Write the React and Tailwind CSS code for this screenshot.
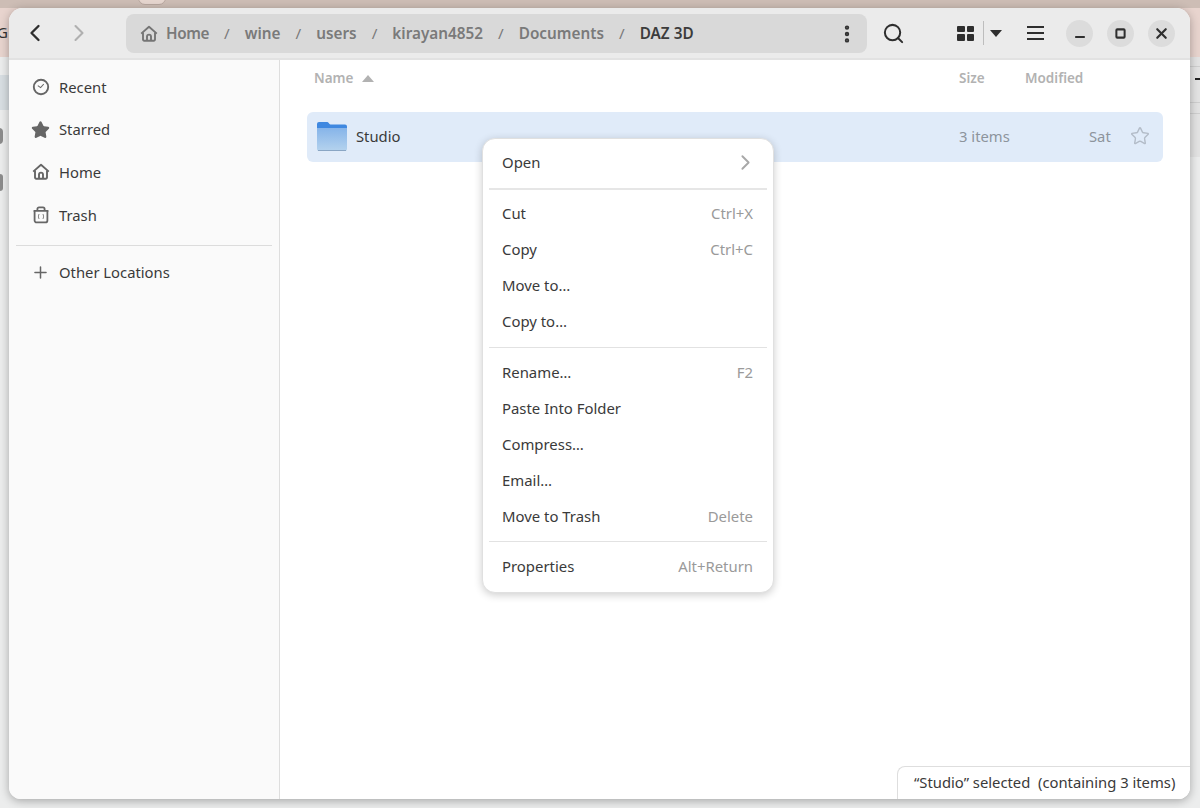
import React from 'react';
import { ChevronLeft, ChevronRight, Search, EllipsisVertical, X, Minus, Square, Plus, Star } from 'lucide-react';

const font = "font-['Noto_Sans',sans-serif]";

const ClockIcon = () => (
    <svg width="18" height="18" viewBox="0 0 18 18" fill="none" stroke="#666" strokeWidth="1.9">
        <circle cx="9" cy="9" r="7.2" />
        <path d="M5.8 7.6 8.6 9.6 11.8 6" strokeWidth="1.1" />
    </svg>
);

const HomeIcon = ({ color = '#666' }) => (
    <svg width="18" height="18" viewBox="0 0 18 18" fill="none" stroke={color} strokeWidth="1.9" strokeLinejoin="round">
        <path d="M1.2 8.6 9 1.8l7.8 6.8" />
        <path d="M3 7.4v7.2a1.2 1.2 0 0 0 1.2 1.2h9.6a1.2 1.2 0 0 0 1.2-1.2V7.4" />
        <path d="M7 15.6v-4a2 2 0 0 1 4 0v4" />
    </svg>
);

const TrashIcon = () => (
    <svg width="18" height="18" viewBox="0 0 18 18" fill="none" stroke="#666" strokeWidth="1.8" strokeLinejoin="round">
        <path d="M1.6 4.8h14.8" />
        <path d="M5.4 4.6V3a1.6 1.6 0 0 1 1.6-1.6h4A1.6 1.6 0 0 1 12.6 3v1.6" />
        <path d="M2.6 4.8v9.6a2 2 0 0 0 2 2h8.8a2 2 0 0 0 2-2V4.8" />
        <path d="M7 8.2c-.7 1.4-.7 3.2 0 4.6M11 8.2c.7 1.4.7 3.2 0 4.6" strokeWidth="1" />
    </svg>
);

const HamburgerIcon = () => (
    <svg width="17" height="14" viewBox="0 0 17 14" fill="#2e2e2e" className="block">
        <rect x="0" y="0" width="17" height="2" />
        <rect x="0" y="6" width="17" height="2" />
        <rect x="0" y="12" width="17" height="2" />
    </svg>
);

const FolderIcon = () => (
    <svg width="32" height="32" viewBox="0 0 32 32">
        <defs>
            <linearGradient id="folderBody" x1="0" y1="0" x2="0" y2="1">
                <stop offset="0" stopColor="#86b4e9" />
                <stop offset="1" stopColor="#b5d3ee" />
            </linearGradient>
        </defs>
        <path d="M1 4a2 2 0 0 1 2-2h7.5c1.2 0 1.8.5 2.6 1.4.6.7 1 1 2 1H29a2 2 0 0 1 2 2V12H1z" fill="#3f88e0" />
        <path d="M1 8h30v21a2 2 0 0 1-2 2H3a2 2 0 0 1-2-2z" fill="url(#folderBody)" />
        <path d="M2 30.5h28" stroke="#8aa6c4" strokeWidth="1" />
    </svg>
);

const SidebarItem = ({ icon, label }) => (
    <div className="flex items-center h-[42.7px] pl-[22px] gap-[9px] text-[14.8px] text-[#3a3a3a]">
        <span className="w-[19px] flex justify-center">{icon}</span>
        <span>{label}</span>
    </div>
);

const MenuItem = ({ label, hint, arrow }) => (
    <div className="flex items-center justify-between h-9 pl-[19px] pr-[20px] text-[14.9px] text-[#3a3a3a]">
        <span>{label}</span>
        {hint && <span className="text-[#9a9a9a]">{hint}</span>}
        {arrow && <ChevronRight size={25} strokeWidth={1.8} className="text-[#a8a8a8] -mr-[5px]" />}
    </div>
);

const Crumb = ({ children, last, tight }) => (
    <span className={`text-[15.3px] font-semibold ${tight ? 'tracking-[-0.4px]' : ''} ${last ? 'text-[#3c3c3c]' : 'text-[#7a7a7a]'}`}>{children}</span>
);

const Slash = () => <span className="text-[15.3px] text-[#7a7a7a] px-[15px]">/</span>;

const WindowButton = ({ children }) => (
    <div className="w-[27px] h-[27px] rounded-full bg-[#dcdcdc] flex items-center justify-center text-[#2e2e2e]">{children}</div>
);

export default function App() {
    return (
        <div className={`${font} relative w-[1200px] h-[808px] overflow-hidden bg-[#eceded] pl-[9px] pt-2 pr-[10px] pb-[9px]`}>
            {/* desktop behind the window */}
            <div className="absolute left-0 right-0 top-0 h-[57px] bg-[#e8d4ce]" />
            <div className="absolute left-0 right-0 top-0 h-2 bg-[#cdbdb5]" />
            <div className="absolute left-[138px] -top-[9px] w-[28px] h-[14px] rounded-full bg-[#e6d6cf] border border-[#b8a79f]" />
            <span className="absolute -left-[3px] top-[25px] text-[15px] text-[#333] leading-none">G</span>
            <div className="absolute left-0 top-[75px] w-[9px] h-[35px] bg-[#d8dee2]" />
            <div className="absolute -left-[5px] top-[128px] w-[8px] h-[16px] rounded-full bg-[#8c8c8c]" />
            <div className="absolute -left-[5px] top-[174px] w-[8px] h-[17px] rounded-[3px] bg-[#8c8c8c]" />
            <div className="absolute right-0 top-[57px] w-[10px] h-[100px] bg-[#e3e3e3]" />
            <div className="absolute right-0 top-[66px] w-[10px] h-px bg-[#cfcfcf]" />
            <div className="absolute right-0 top-[78px] w-[5px] h-[1.5px] bg-[#222]" />
            <div className="absolute right-0 top-[102px] w-[10px] h-px bg-[#cfcfcf]" />
            <div className="absolute right-0 top-[113px] w-[10px] h-px bg-[#cfcfcf]" />

            <div className="relative h-full rounded-t-[14px] rounded-b-[12px] overflow-hidden bg-white flex flex-col shadow-[0_2px_10px_rgba(0,0,0,0.3)]">
                {/* header bar */}
                <header className="h-[52px] shrink-0 bg-[#ebebeb] border-b-2 border-[#e2e2e2] flex items-center">
                    <ChevronLeft size={28} strokeWidth={2} className="text-[#2e2e2e] ml-[12px]" />
                    <ChevronRight size={28} strokeWidth={1.8} className="text-[#b0b0b0] ml-[16px]" />
                    <div className="w-[741px] h-[39px] ml-[33px] rounded-lg bg-[#d9d9d9] flex items-center pl-[14px] mt-[1px]">
                        <HomeIcon color="#757575" />
                        <span className="w-2" />
                        <Crumb tight>Home</Crumb>
                        <Slash />
                        <Crumb>wine</Crumb>
                        <Slash />
                        <Crumb>users</Crumb>
                        <Slash />
                        <Crumb>kirayan4852</Crumb>
                        <Slash />
                        <Crumb>Documents</Crumb>
                        <Slash />
                        <Crumb last>DAZ 3D</Crumb>
                        <EllipsisVertical size={22} strokeWidth={2.8} className="text-[#333] ml-auto mr-[9px]" />
                    </div>
                    <Search size={23} strokeWidth={2.1} className="text-[#2e2e2e] ml-[15px]" />
                    <div className="ml-[52px] grid grid-cols-2 gap-[2px] w-[17px] h-[15px]">
                        <span className="bg-[#2e2e2e] rounded-[1px]" />
                        <span className="bg-[#2e2e2e] rounded-[1px]" />
                        <span className="bg-[#2e2e2e] rounded-[1px]" />
                        <span className="bg-[#2e2e2e] rounded-[1px]" />
                    </div>
                    <div className="w-px h-6 bg-[#bdbdbd] ml-[9px]" />
                    <div className="ml-[6px] w-0 h-0 border-l-[6.5px] border-r-[6.5px] border-t-[7px] border-l-transparent border-r-transparent border-t-[#2e2e2e]" />
                    <span className="ml-[25px]"><HamburgerIcon /></span>
                    <div className="ml-[22px] flex gap-[14px]">
                        <WindowButton><Minus size={14} strokeWidth={3.4} className="mt-[7px]" /></WindowButton>
                        <WindowButton><Square size={11} strokeWidth={4.4} /></WindowButton>
                        <WindowButton><X size={17} strokeWidth={3} /></WindowButton>
                    </div>
                </header>

                <div className="flex-1 flex min-h-0">
                    {/* sidebar */}
                    <aside className="w-[271px] shrink-0 bg-[#fafafa] border-r border-[#dedede] pt-[5.5px]">
                        <SidebarItem icon={<ClockIcon />} label="Recent" />
                        <SidebarItem icon={<Star size={20} fill="#666" stroke="#666" />} label="Starred" />
                        <SidebarItem icon={<HomeIcon />} label="Home" />
                        <SidebarItem icon={<TrashIcon />} label="Trash" />
                        <div className="h-px bg-[#dcdcdc] mx-[7px] mt-[8.5px] mb-[5px]" />
                        <SidebarItem icon={<Plus size={23} strokeWidth={1.9} color="#666" />} label="Other Locations" />
                    </aside>

                    {/* file list */}
                    <main className="flex-1 relative bg-white">
                        <div className="h-[36px] flex items-center text-[13.5px] font-semibold text-[#b2b2b2] pr-[105px]">
                            <span className="ml-[34px]">Name</span>
                            <span className="ml-[9px] w-0 h-0 border-l-[6.5px] border-r-[6.5px] border-b-[7px] border-l-transparent border-r-transparent border-b-[#b2b2b2]" />
                            <span className="ml-auto w-[66px]">Size</span>
                            <span className="w-[60px]">Modified</span>
                        </div>
                        <div className="mt-[16px] mx-[27px] h-[50px] rounded-md bg-[#e0ebf9] flex items-center pl-[9px] pb-[2px] text-[14.8px]">
                            <FolderIcon />
                            <span className="ml-[8px] text-[#3a3a3a]">Studio</span>
                            <span className="ml-auto w-[130px] text-[#8d949c]">3 items</span>
                            <span className="w-[41px] text-[#8d949c]">Sat</span>
                            <Star size={20} strokeWidth={1.7} className="text-[#b3bcc8] mr-[13px]" />
                        </div>

                        {/* context menu */}
                        <div className="absolute left-[202px] top-[78px] w-[292px] h-[455px] rounded-[13px] bg-white border border-[#e0e0e0] shadow-[0_2px_8px_rgba(0,0,0,0.2)] pt-[5px]">
                            <MenuItem label="Open" arrow />
                            <div className="h-[2px] bg-[#e6e6e6] mx-[6px] mt-[8px] mb-[5px]" />
                            <MenuItem label="Cut" hint="Ctrl+X" />
                            <MenuItem label="Copy" hint="Ctrl+C" />
                            <MenuItem label="Move to…" />
                            <MenuItem label="Copy to…" />
                            <div className="h-px bg-[#e2e2e2] mx-[6px] mt-[8px] mb-[6px]" />
                            <MenuItem label="Rename…" hint="F2" />
                            <MenuItem label="Paste Into Folder" />
                            <MenuItem label="Compress…" />
                            <MenuItem label="Email…" />
                            <MenuItem label="Move to Trash" hint="Delete" />
                            <div className="h-px bg-[#e2e2e2] mx-[6px] mt-[7px] mb-[6px]" />
                            <MenuItem label="Properties" hint="Alt+Return" />
                        </div>

                        {/* status overlay */}
                        <div className="absolute right-0 bottom-0 w-[293px] h-[33px] bg-white border-t border-l border-[#dedede] rounded-tl-lg flex items-center pl-[16px] pb-[2px] text-[14.8px] text-[#3a3a3a] whitespace-pre">
                            “Studio” selected  (containing 3 items)
                        </div>
                    </main>
                </div>
            </div>
        </div>
    );
}
